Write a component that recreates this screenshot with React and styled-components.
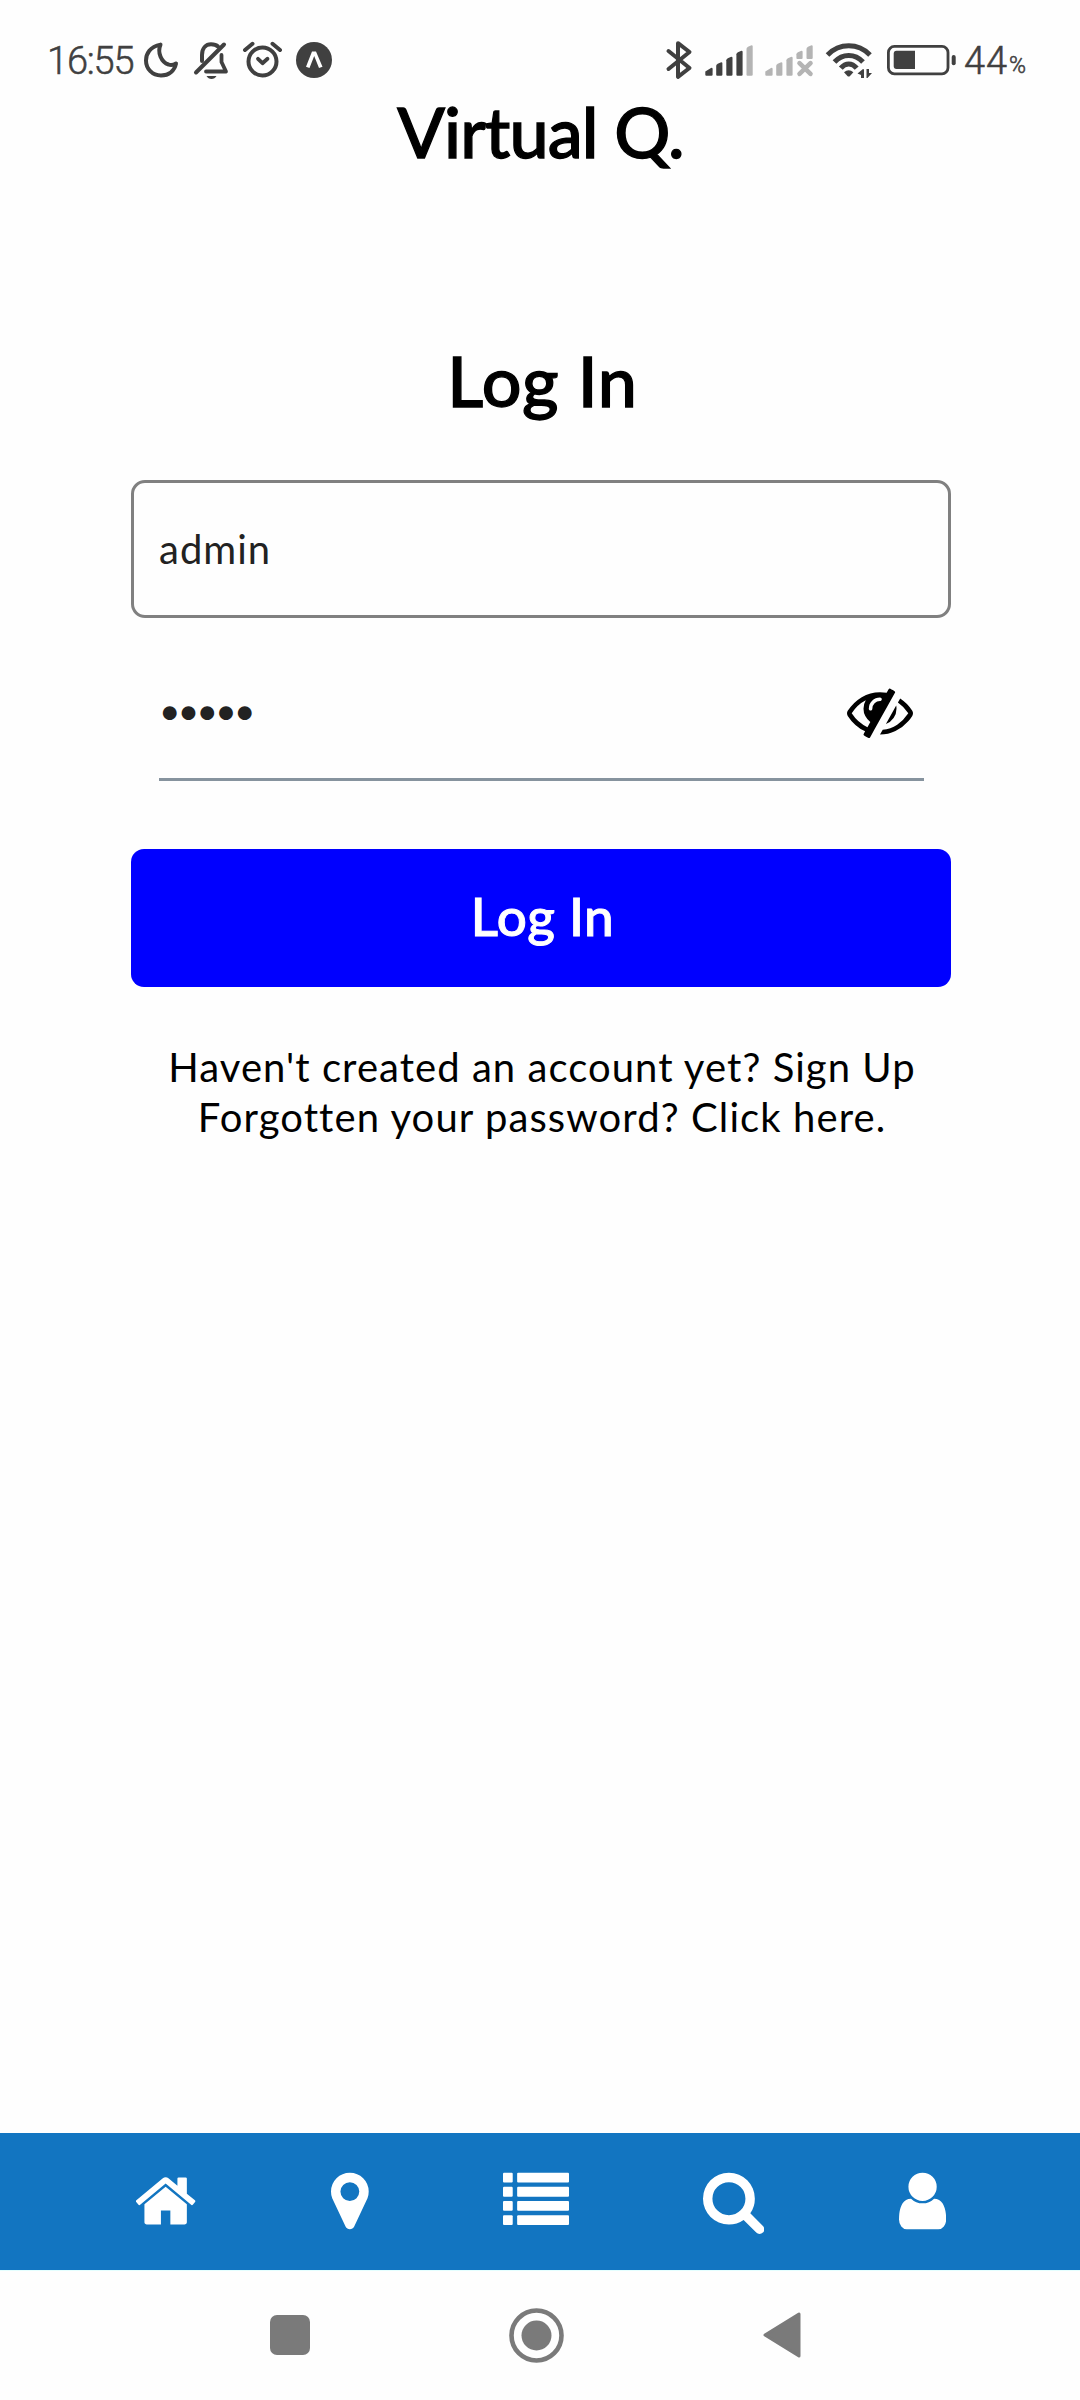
import React from "react";
import styled, { createGlobalStyle } from "styled-components";

const GlobalStyle = createGlobalStyle`
  *, *::before, *::after { box-sizing: border-box; }
  html, body { margin: 0; padding: 0; background: #fefefe; }
  body { font-family: Lato, "Open Sans", sans-serif; color: #000; }
  svg { display: block; flex: none; }
`;

const INK = "#404040";
const FAINT = "#b4b4b4";

const Screen = styled.div`
  display: flex;
  flex-direction: column;
  width: 1080px;
  height: 2400px;
  overflow: hidden;
  background: #fefefe;
`;

const StatusBar = styled.header`
  display: flex;
  justify-content: space-between;
  align-items: center;
  height: 96px;
  padding: 0 53px 0 47px;
  flex: none;
  & > div { height: 120px; margin-top: 24px; }
`;

const StatusGroup = styled.div`
  display: flex;
  align-items: flex-start;
`;

const StatusText = styled.span`
  width: ${(p) => p.$width}px;
  height: 120px;
  line-height: ${(p) => p.$line}px;
  padding-left: ${(p) => p.$inset || 0}px;
  font-family: Roboto, sans-serif;
  font-weight: ${(p) => p.$weight || 300};
  font-size: ${(p) => p.$size}px;
  letter-spacing: ${(p) => p.$spacing || 0}px;
  color: ${INK};
  white-space: nowrap;
  -webkit-text-stroke: 0.5px ${INK};
`;

const Title = styled.h1`
  margin: 0;
  height: 70px;
  line-height: 70px;
  padding-left: ${(p) => p.$inset || 0}px;
  font-size: 70px;
  font-weight: 500;
  text-align: center;
  letter-spacing: ${(p) => p.$spacing}px;
  -webkit-text-stroke: 1.3px #000;
`;

const Form = styled.main`
  display: flex;
  flex-direction: column;
  width: 820px;
  margin: 179px 0 0 131px;
  flex: 1;
`;

const TextField = styled.div`
  display: flex;
  align-items: center;
  height: 138px;
  margin-top: 65px;
  padding: 0 25px 1px;
  border: 3px solid #808080;
  border-radius: 14px;
  font-size: 40px;
  line-height: 50px;
  letter-spacing: 1px;
  color: #222;
`;

const PasswordField = styled.div`
  display: flex;
  align-items: center;
  justify-content: space-between;
  height: 113px;
  margin: 50px 27px 0 28px;
  padding: 0 11px 24px 0;
  border-bottom: 3px solid #86939e;
`;

const Mask = styled.span`
  padding-bottom: 2px;
  font-size: 37px;
  line-height: 50px;
  letter-spacing: -2.7px;
  color: #222;
`;

const Button = styled.div`
  display: flex;
  align-items: center;
  justify-content: center;
  height: 138px;
  margin-top: 68px;
  padding: 0 0 4px 3px;
  border-radius: 13px;
  background: #0000ff;
  color: #fff;
  font-size: 53px;
  font-weight: 500;
  line-height: 60px;
  letter-spacing: 0.4px;
  -webkit-text-stroke: 1px #fff;
`;

const Links = styled.div`
  display: flex;
  flex-direction: column;
  margin-top: 55px;
`;

const LinkLine = styled.p`
  margin: 0;
  padding-left: 2px;
  font-size: 40px;
  line-height: 50px;
  text-align: center;
  white-space: nowrap;
  letter-spacing: ${(p) => p.$spacing}px;
`;

const TabBar = styled.nav`
  display: flex;
  justify-content: space-evenly;
  height: 137px;
  padding: 35px 0 0 1px;
  flex: none;
  background: #1275c1;
`;

const SystemNav = styled.footer`
  display: flex;
  align-items: center;
  height: 130px;
  padding: 0 0 1px 270px;
  flex: none;
  border-top: 1px solid #e4ffff;
`;

const NavSlot = styled.div`
  margin-right: ${(p) => p.$after || 0}px;
`;

function StatusIcons() {
  return (
    <svg width="190" height="120" viewBox="143 0 190 120" fill="none" stroke={INK} strokeLinecap="round" strokeLinejoin="round">
      <path d="M160.5 44.600C150 46.500 146 54 146 60.500C146 69 152.500 75.500 161 75.500C169 75.500 174.500 70.500 176 63.500C173.500 65 171 65.500 168.500 64.500C161.500 62.500 157 52.500 160.500 44.600Z" strokeWidth="4" />
      <path d="M224 44.500L196 72.500" strokeWidth="4" />
      <path d="M202 61V55C202 48 206 44.200 211 44.200C214 44.200 216.500 45 218 46.500" strokeWidth="4" />
      <path d="M221.500 55V62L226 71.500H206" strokeWidth="3.800" />
      <path d="M206.500 76H216.500C214.500 80 208.500 80 206.500 76Z" fill={INK} stroke="none" />
      <circle cx="262.500" cy="61.500" r="14" strokeWidth="4" />
      <path d="M245 50L252.500 43.800M280 50L272.500 43.800" strokeWidth="4" />
      <path d="M258 58.800L262.500 63.200L267.500 58.800" strokeWidth="3.800" />
      <circle cx="314" cy="60" r="18" fill={INK} stroke="none" />
      <path d="M306 66.700L312 51.500H316L322.500 66.700L319 68L314.200 56L309.500 68Z" fill="#fefefe" stroke="none" />
    </svg>
  );
}

function Bar({ x, top, faint, bottom = 75.7 }) {
  return (
    <path
      d={`M${x} ${bottom - 1}V${top + 3.500}Q${x} ${top + 2.300} ${x + 1.500} ${top + 1.500}L${x + 5} ${top}Q${x + 6.200} ${top} ${x + 6.200} ${top + 1}V${bottom - 1}Q${x + 6.200} ${bottom} ${x + 5} ${bottom}H${x + 1}Q${x} ${bottom} ${x} ${bottom - 1}Z`}
      fill={faint ? FAINT : INK}
      stroke="none"
    />
  );
}

function RadioIcons() {
  return (
    <svg width="298" height="120" viewBox="665 0 298 120" fill="none" stroke={INK} strokeLinecap="round" strokeLinejoin="round">
      <path d="M668.500 51L689.500 68L678 76.800V43.200L689.500 52L668.500 69" strokeWidth="4" />
      <path d="M705.300 74.700V71.500L711 67.900Q712.600 67.500 712.600 68.900V74.700Q712.600 75.700 711.500 75.700H706.300Q705.300 75.700 705.300 74.700Z" fill={INK} stroke="none" />
      <Bar x={716.200} top={62.300} />
      <Bar x={726.300} top={56.700} />
      <Bar x={736.400} top={50.700} />
      <Bar x={746.500} top={45.300} faint />
      <path d="M765.300 74.700V71.500L771 67.900Q772.600 67.500 772.600 68.900V74.700Q772.600 75.700 771.500 75.700H766.300Q765.300 75.700 765.300 74.700Z" fill={FAINT} stroke="none" />
      <Bar x={776.200} top={62.300} faint />
      <Bar x={786.400} top={56.700} faint />
      <Bar x={796.400} top={50.700} bottom={59} faint />
      <Bar x={806.500} top={45.300} bottom={59} faint />
      <path d="M799.500 63.200L810.500 73.800M810.500 63.200L799.500 73.800" strokeWidth="4.600" stroke={FAINT} />
      <g strokeLinecap="butt" strokeWidth="5">
        <path d="M827.500 55C839.500 42.800 858 42.800 870 55" />
        <path d="M834.500 62C842.500 53.200 855 53.200 863 62" />
        <path d="M840.800 68.200C845.500 62.500 852 62.500 856.700 68.200" />
      </g>
      <path d="M844 72.300Q848.700 68 853.400 72.300L850 76Q848.700 77.200 847.400 76Z" fill={INK} stroke="none" />
      <path d="M864 69.500V78H861V75L857.500 73.500L863 69ZM866.500 69H869V73L872 73L867.500 78H866.500Z" fill={INK} stroke="none" />
      <rect x="888.400" y="46.400" width="59.600" height="27.400" rx="6" strokeWidth="2.800" />
      <path d="M915 50.700V69H896.500Q893.700 69 893.700 66V53.700Q893.700 50.700 896.500 50.700Z" fill={INK} stroke="none" />
      <rect x="951.700" y="55" width="4" height="10.300" rx="2" fill={INK} stroke="none" />
    </svg>
  );
}

function EyeSlash() {
  return (
    <svg width="66" height="66" viewBox="0 0 1792 1792" fill="#000">
      <path d="M555 1335l78-141q-87-63-136-159t-49-203q0-121 61-225-229 117-381 353 167 258 427 375zm389-759q0-20-14-34t-34-14q-125 0-214.500 89.500t-89.500 214.500q0 20 14 34t34 14 34-14 14-34q0-86 61-147t147-61q20 0 34-14t14-34zm363-191q0 7-1 9-105 188-315 566t-316 567l-49 89q-10 16-28 16-12 0-134-70-16-10-16-28 0-12 44-87-143-65-263.500-173t-208.500-245q-20-31-20-69t20-69q153-235 380-371t496-136q89 0 180 17l54-97q10-16 28-16 5 0 18 6t31 15.500 33 18.500 31.500 18.500 19.500 11.500q16 10 16 27zm37 447q0 139-79 253.500t-209 164.500l280-502q8 45 8 84zm448 128q0 35-20 69-39 64-109 145-150 172-347.500 267t-419.500 95l74-132q212-18 392.500-137t301.500-307q-115-179-282-294l63-112q95 64 182.500 153t144.500 184q20 34 20 69z" />
    </svg>
  );
}

const TABS = [
  { name: "home", x: 64, w: 1664, d: "M1472 992v480q0 26-19 45t-45 19h-384v-384h-256v384h-384q-26 0-45-19t-19-45v-480q0-1 .5-3t.5-3l575-474 575 474q1 2 1 6zm223-69l-62 74q-8 9-21 11h-3q-13 0-21-7l-692-577-692 577q-12 8-24 7-13-2-21-11l-62-74q-8-10-7-23.500t11-21.500l719-599q32-26 76-26t76 26l244 204v-195q0-14 9-23t23-9h192q14 0 23 9t9 23v408l219 182q10 8 11 21.500t-7 23.500z" },
  { name: "places", x: 384, w: 1024, d: "M1152 640q0-106-75-181t-181-75-181 75-75 181 75 181 181 75 181-75 75-181zm256 0q0 109-33 179l-364 774q-16 33-47.500 52t-67.500 19-67.500-19-46.500-52l-365-774q-33-70-33-179 0-212 150-362t362-150 362 150 150 362z" },
  { name: "list", x: 0, w: 1792 },
  { name: "search", x: 64, w: 1664, d: "M1216 832q0-185-131.500-316.500t-316.500-131.500-316.500 131.500-131.500 316.500 131.500 316.500 316.500 131.500 316.500-131.500 131.500-316.500zm512 832q0 52-38 90t-90 38q-54 0-90-38l-343-342q-179 124-399 124-143 0-273.500-55.500t-225-150-150-225-55.500-273.500 55.500-273.500 150-225 225-150 273.500-55.500 273.500 55.500 225 150 150 225 55.500 273.500q0 220-124 399l343 343q37 37 37 90z" },
  { name: "profile", x: 256, w: 1280, d: "M1536 1399q0 109-62.500 187t-150.500 78h-854q-88 0-150.500-78t-62.500-187q0-85 8.500-160.500t31.500-152 58.500-131 94-89 134.500-34.500q131 128 313 128t313-128q76 0 134.500 34.500t94 89 58.500 131 31.500 152 8.500 160.500zm-256-887q0 159-112.500 271.500t-271.500 112.500-271.500-112.500-112.500-271.500 112.500-271.500 271.500-112.500 271.500 112.500 112.500 271.500z" },
];

function TabIcon({ tab }) {
  return (
    <svg width={(tab.w * 66) / 1792} height="67" viewBox={`${tab.x} 0 ${tab.w} 1819`} fill="#fff">
      {tab.d ? (
        <path d={tab.d} />
      ) : (
        [0, 1, 2, 3].map((i) => (
          <g key={i}>
            <rect x="0" y={128 + i * 384} width="264" height="268" rx="28" />
            <rect x="384" y={128 + i * 384} width="1408" height="268" rx="28" />
          </g>
        ))
      )}
    </svg>
  );
}

export default function App() {
  return (
    <Screen>
      <GlobalStyle />
      <StatusBar>
        <StatusGroup>
          <StatusText $width={96} $size={38} $line={122} $spacing={-1.2}>16:55</StatusText>
          <StatusIcons />
        </StatusGroup>
        <StatusGroup>
          <RadioIcons />
          <StatusText $width={46} $size={38} $line={122} $spacing={1} $inset={1}>44</StatusText>
          <StatusText $width={18} $size={23} $line={132}>%</StatusText>
        </StatusGroup>
      </StatusBar>
      <Title $spacing={-0.9} $inset={1}>Virtual Q.</Title>
      <Form>
        <Title as="h2" $spacing={0.7} $inset={3}>Log In</Title>
        <TextField>admin</TextField>
        <PasswordField>
          <Mask>•••••</Mask>
          <EyeSlash />
        </PasswordField>
        <Button>Log In</Button>
        <Links>
          <LinkLine $spacing={1.05}>Haven't created an account yet? Sign Up</LinkLine>
          <LinkLine $spacing={1.1}>Forgotten your password? Click here.</LinkLine>
        </Links>
      </Form>
      <TabBar>
        {TABS.map((tab) => (
          <TabIcon key={tab.name} tab={tab} />
        ))}
      </TabBar>
      <SystemNav>
        <NavSlot $after={199}>
          <svg width="40" height="40" viewBox="0 0 40 40"><rect width="40" height="40" rx="7" fill="#7a7a7a" /></svg>
        </NavSlot>
        <NavSlot $after={199}>
          <svg width="55" height="55" viewBox="0 0 55 55">
            <circle cx="27.500" cy="27.500" r="25" fill="none" stroke="#7a7a7a" strokeWidth="4.600" />
            <circle cx="27.500" cy="27.500" r="15" fill="#7a7a7a" />
          </svg>
        </NavSlot>
        <NavSlot>
          <svg width="38" height="46" viewBox="0 0 38 46">
            <path d="M2 23L36 2V44Z" fill="#7a7a7a" stroke="#7a7a7a" strokeWidth="3" strokeLinejoin="round" />
          </svg>
        </NavSlot>
      </SystemNav>
    </Screen>
  );
}
